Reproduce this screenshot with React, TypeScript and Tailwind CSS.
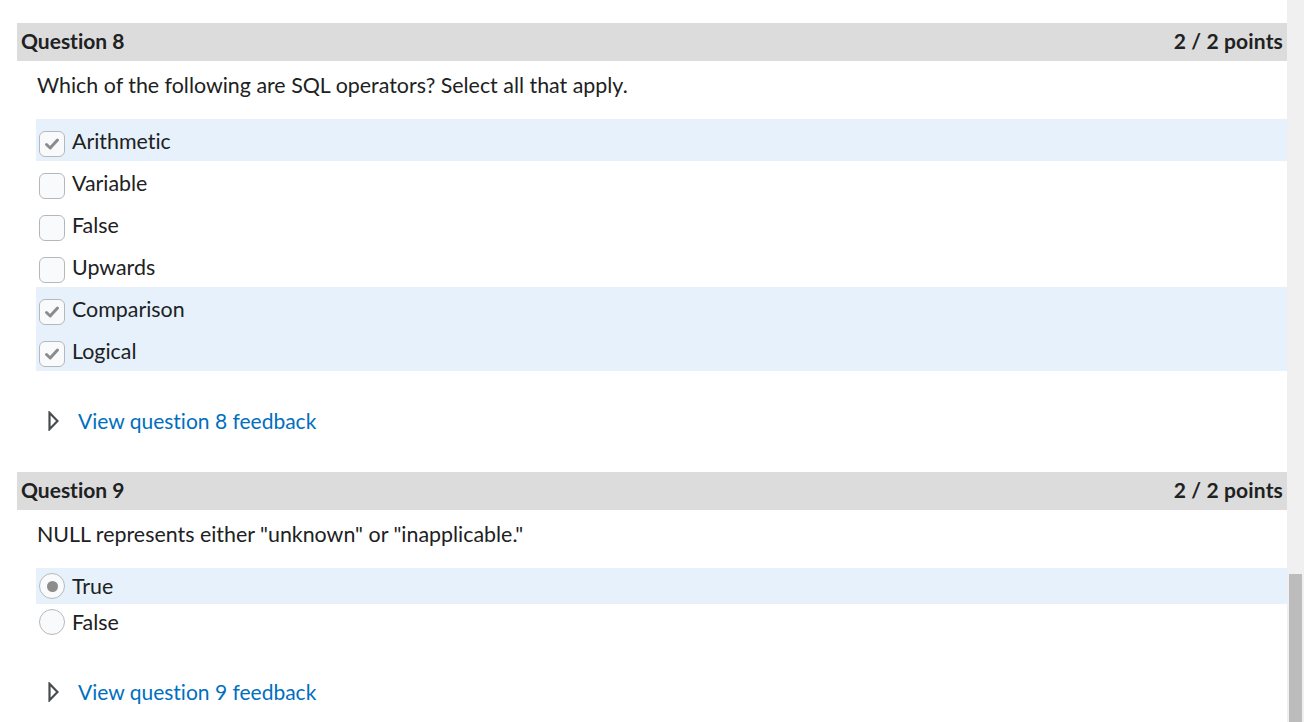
import React from "react";

type Choice = { label: string; selected: boolean };

type QuestionProps = {
  number: number;
  points: string;
  prompt: string;
  kind: "checkbox" | "radio";
  choices: Choice[];
};

function CheckBox({ checked }: { checked: boolean }) {
  return (
    <span className="mt-[8px] flex h-[26px] w-[26px] shrink-0 items-center justify-center rounded-[6px] border border-[#b5b8bb] bg-[#f9fafb]">
      {checked && (
        <svg width="18" height="18" viewBox="0 0 18 18" fill="none">
          <path
            d="M3.5 9.5 L7.2 13 L14.5 5"
            stroke="#8c8c8c"
            strokeWidth="3"
            strokeLinecap="round"
            strokeLinejoin="round"
          />
        </svg>
      )}
    </span>
  );
}

function Radio({ checked }: { checked: boolean }) {
  return (
    <span className="flex h-[26px] w-[26px] shrink-0 items-center justify-center rounded-full border border-[#b5b8bb] bg-[#f9fafb]">
      {checked && <span className="h-[11px] w-[11px] rounded-full bg-[#8c8c8c]" />}
    </span>
  );
}

function Feedback({ number }: { number: number }) {
  return (
    <div className="flex h-[24px] items-center pl-[31px]">
      <svg width="11" height="20" viewBox="0 0 11 20" fill="none" className="shrink-0">
        <path d="M1.5 1.8 L9.5 10 L1.5 18.2 Z" stroke="#494c4e" strokeWidth="2.2" strokeLinejoin="miter" />
      </svg>
      <span className="ml-[19px] text-[21px] leading-[24px] text-[#006fbf]">View question {number} feedback</span>
    </div>
  );
}

function Question({ number, points, prompt, kind, choices }: QuestionProps) {
  const rowH = kind === "checkbox" ? "h-[42px]" : "h-[36px]";
  return (
    <section>
      <div className="flex h-[38px] items-center justify-between bg-[#dcdcdc] px-[4px] pb-[2px] text-[21px] font-bold text-[#202122]">
        <h2>Question {number}</h2>
        <span className="tracking-[0.15px]">{points}</span>
      </div>
      <p className="mt-[12px] mb-[22px] pl-[20px] text-[21.4px] leading-[24px] text-[#202122]">{prompt}</p>
      <div className="ml-[19px]">
        {choices.map((c) => (
          <div
            key={c.label}
            className={`flex ${rowH} items-center gap-[7px] pl-[3px] ${c.selected ? "bg-[#e6f1fb]" : ""}`}
          >
            {kind === "checkbox" ? <CheckBox checked={c.selected} /> : <Radio checked={c.selected} />}
            <span className={`text-[21.4px] text-[#202122] ${kind === "checkbox" ? "pt-[2px]" : ""}`}>{c.label}</span>
          </div>
        ))}
      </div>
      <div className={kind === "checkbox" ? "mt-[38px] mb-[39px]" : "mt-[40px]"}>
        <Feedback number={number} />
      </div>
    </section>
  );
}

export default function App() {
  return (
    <div className="flex h-[722px] w-[1310px] overflow-hidden bg-white font-['Lato',sans-serif] [font-variant-ligatures:none]">
      <main className="w-[1287px] pl-[17px] pt-[23px]">
        <Question
          number={8}
          points="2 / 2 points"
          prompt="Which of the following are SQL operators? Select all that apply."
          kind="checkbox"
          choices={[
            { label: "Arithmetic", selected: true },
            { label: "Variable", selected: false },
            { label: "False", selected: false },
            { label: "Upwards", selected: false },
            { label: "Comparison", selected: true },
            { label: "Logical", selected: true },
          ]}
        />
        <Question
          number={9}
          points="2 / 2 points"
          prompt={'NULL represents either "unknown" or "inapplicable."'}
          kind="radio"
          choices={[
            { label: "True", selected: true },
            { label: "False", selected: false },
          ]}
        />
      </main>
      <div className="flex w-[17px] flex-col bg-[#f0f0f0]">
        <div className="mx-[2px] mt-[574px] flex-1 bg-[#bcbcbc]" />
      </div>
    </div>
  );
}
